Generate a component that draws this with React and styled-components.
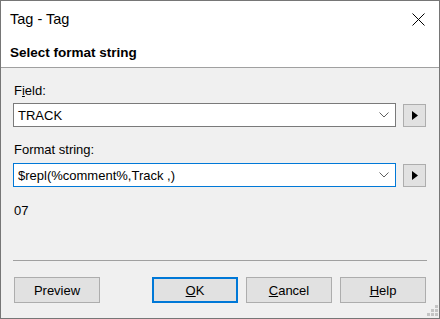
import React from "react"
import styled, { createGlobalStyle } from "styled-components"

const Global = createGlobalStyle`
    html, body {
        margin: 0;
        padding: 0;
        background: #ffffff;
    }
    body {
        font-family: "Liberation Sans", Arial, sans-serif;
        font-size: 13px;
        color: #000000;
    }
`

const Window = styled.div`
    width: 440px;
    height: 319px;
    box-sizing: border-box;
    border: 1px solid #767676;
    background-color: #f0f0f0;
    display: flex;
    flex-direction: column;
`

const TitleBar = styled.div`
    height: 36px;
    background-color: #ffffff;
    display: flex;
    align-items: center;
    justify-content: space-between;
    padding: 0 14px 0 9px;
`

const TitleText = styled.div`
    font-size: 14.5px;
    color: #000000;
`

const CloseIcon = styled.svg`
    width: 13px;
    height: 13px;
    display: block;
`

const Header = styled.div`
    height: 31px;
    box-sizing: border-box;
    background-color: #ffffff;
    border-bottom: 1px solid #a0a0a0;
    padding: 8px 9px 0;
    font-size: 13.5px;
    font-weight: 700;
    line-height: 16px;
`

const Body = styled.div`
    flex: 1;
    padding: 15px 12px 0;
    display: flex;
    flex-direction: column;
`

const Label = styled.div`
    line-height: 16px;
    margin-top: ${p => p.$top || 0}px;
    padding-left: 1px;
`

const Row = styled.div`
    display: flex;
    align-items: center;
    gap: 7px;
    margin-top: ${p => p.$top || 0}px;
`

const Combo = styled.div`
    flex: 1;
    height: 24px;
    box-sizing: border-box;
    border: 1px solid ${p => (p.$focused ? "#0078d7" : "#7a7a7a")};
    background-color: #ffffff;
    display: flex;
    align-items: center;
    justify-content: space-between;
    padding: 0 6px 0 4px;
`

const ComboText = styled.span`
    white-space: pre;
`

const Chevron = styled.svg`
    width: 10px;
    height: 6px;
    display: block;
`

const ArrowButton = styled.div`
    width: 23px;
    height: 23px;
    box-sizing: border-box;
    border: 1px solid #adadad;
    background-color: #e1e1e1;
    display: flex;
    align-items: center;
    justify-content: center;
    margin-right: 1px;
`

const Result = styled.div`
    line-height: 16px;
    margin-top: 16px;
    padding-left: 1px;
`

const Footer = styled.div`
    margin: 0 12px;
    border-top: 1px solid #a0a0a0;
    padding: 16px 0 15px 1px;
    display: flex;
    justify-content: space-between;
    position: relative;
`

const ButtonGroup = styled.div`
    display: flex;
    gap: 8px;
    margin-right: 1px;
`

const Button = styled.div`
    width: 86px;
    height: 26px;
    box-sizing: border-box;
    border: ${p => (p.$default ? "2px solid #0078d7" : "1px solid #adadad")};
    background-color: #e1e1e1;
    display: flex;
    align-items: center;
    justify-content: center;
    font-size: 13px;
`

const Grip = styled.svg`
    position: absolute;
    right: -12px;
    bottom: 1px;
    width: 12px;
    height: 12px;
`

function ComboBox({ text, focused }) {
    return (
        <Combo $focused={focused}>
            <ComboText>{text}</ComboText>
            <Chevron viewBox="0 0 10 6">
                <path d="M0.5 0.5 L5 5 L9.5 0.5" fill="none" stroke="#606060" strokeWidth="1" />
            </Chevron>
        </Combo>
    )
}

function PlayButton() {
    return (
        <ArrowButton>
            <svg width="6" height="9" viewBox="0 0 6 9">
                <path d="M0 0 L6 4.5 L0 9 Z" fill="#000000" />
            </svg>
        </ArrowButton>
    )
}

export default function App() {
    return (
        <>
            <Global />
            <Window>
                <TitleBar>
                    <TitleText>Tag - Tag</TitleText>
                    <CloseIcon viewBox="0 0 13 13">
                        <path d="M0.5 0.5 L12.5 12.5 M12.5 0.5 L0.5 12.5" stroke="#000000" strokeWidth="1" />
                    </CloseIcon>
                </TitleBar>
                <Header>Select format string</Header>
                <Body>
                    <Label>F<u>i</u>eld:</Label>
                    <Row $top={4}>
                        <ComboBox text="TRACK" />
                        <PlayButton />
                    </Row>
                    <Label $top={15}>Format string:</Label>
                    <Row $top={5}>
                        <ComboBox text="$repl(%comment%,Track ,)" focused />
                        <PlayButton />
                    </Row>
                    <Result>07</Result>
                </Body>
                <Footer>
                    <Button>Preview</Button>
                    <ButtonGroup>
                        <Button $default><u>O</u>K</Button>
                        <Button><u>C</u>ancel</Button>
                        <Button><u>H</u>elp</Button>
                    </ButtonGroup>
                    <Grip viewBox="0 0 12 12">
                        <rect x="8" y="0" width="3" height="3" fill="#c4c4c4" />
                        <rect x="4" y="4" width="3" height="3" fill="#c4c4c4" />
                        <rect x="8" y="4" width="3" height="3" fill="#c4c4c4" />
                        <rect x="0" y="8" width="3" height="3" fill="#c4c4c4" />
                        <rect x="4" y="8" width="3" height="3" fill="#c4c4c4" />
                        <rect x="8" y="8" width="3" height="3" fill="#c4c4c4" />
                    </Grip>
                </Footer>
            </Window>
        </>
    )
}
